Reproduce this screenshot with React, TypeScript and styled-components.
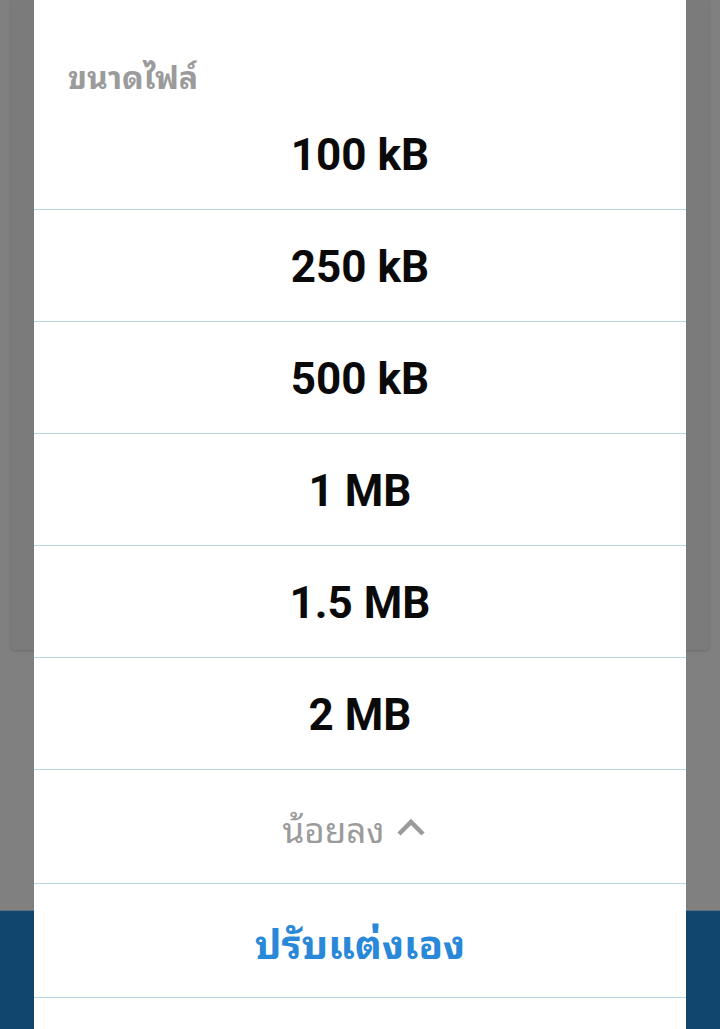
import { FC } from 'react';
import styled, { createGlobalStyle } from 'styled-components';

const GlobalStyle = createGlobalStyle`
  html, body {
    margin: 0;
    padding: 0;
  }
  body {
    font-family: Roboto, 'Noto Sans Thai Looped', Loma, Garuda, 'Tlwg Typist', 'Noto Sans Thai', 'Noto Sans', sans-serif;
  }
`;

const sizes = ['100 kB', '250 kB', '500 kB', '1 MB', '1.5 MB', '2 MB'];

// 背景（暗くなった画面）
const Root = styled.div`
  position: relative;
  width: 720px;
  height: 1029px;
  overflow: hidden;
  background: #808080;
  display: flex;
  flex-direction: column;
`;

const BackCard = styled.div`
  height: 650px;
  margin: 0 11px;
  background: #7b7b7b;
  border-radius: 0 0 4px 4px;
  box-shadow: 0 1px 3px rgba(0, 0, 0, 0.18);
`;

const Spacer = styled.div`
  flex: 1;
`;

const BottomBar = styled.div`
  height: 118px;
  background: #11466f;
  border-top: 1px solid #5f6f7c;
`;

// ダイアログ
const Sheet = styled.div`
  position: absolute;
  top: 0;
  bottom: 0;
  left: 34px;
  width: 652px;
  background: #ffffff;
  display: flex;
  flex-direction: column;
`;

const Title = styled.div`
  padding: 60px 34px 0;
  height: 40px;
  font-size: 32px;
  font-weight: 700;
  color: #9b9b9b;
  line-height: 36px;
`;

const Option = styled.div<{ $first?: boolean }>`
  height: 108px;
  border-bottom: 1px solid #b6d6e2;
  display: flex;
  align-items: center;
  justify-content: center;
  padding-top: ${p => (p.$first ? 1 : 3)}px;
  font-family: Roboto, sans-serif;
  font-size: 44px;
  font-weight: 700;
  color: #0a0a0a;
`;

const LessRow = styled.div`
  height: 113px;
  border-bottom: 1px solid #b6d6e2;
  display: flex;
  align-items: center;
  justify-content: center;
  gap: 11px;
  padding-right: 12px;
  font-size: 35px;
  color: #9b9b9b;
`;

const CustomRow = styled.div`
  height: 113px;
  border-bottom: 1px solid #b6d6e2;
  display: flex;
  align-items: center;
  justify-content: center;
  font-size: 40px;
  font-weight: 700;
  color: #2a88d8;
`;

const Chevron: FC = () => (
  <svg width="30" height="20" viewBox="0 0 30 20">
    <polyline points="3,17 15,5 27,17" fill="none" stroke="#9b9b9b" strokeWidth="4.5" />
  </svg>
);

const App: FC = () => {
  return (
    <Root>
      <GlobalStyle />
      <BackCard />
      <Spacer />
      <BottomBar />
      <Sheet>
        <Title>ขนาดไฟล์</Title>
        {sizes.map((size, key) => (
          <Option key={key} $first={key === 0}>
            {size}
          </Option>
        ))}
        <LessRow>
          <span>น้อยลง</span>
          <Chevron />
        </LessRow>
        <CustomRow>ปรับแต่งเอง</CustomRow>
      </Sheet>
    </Root>
  );
};

export default App;
